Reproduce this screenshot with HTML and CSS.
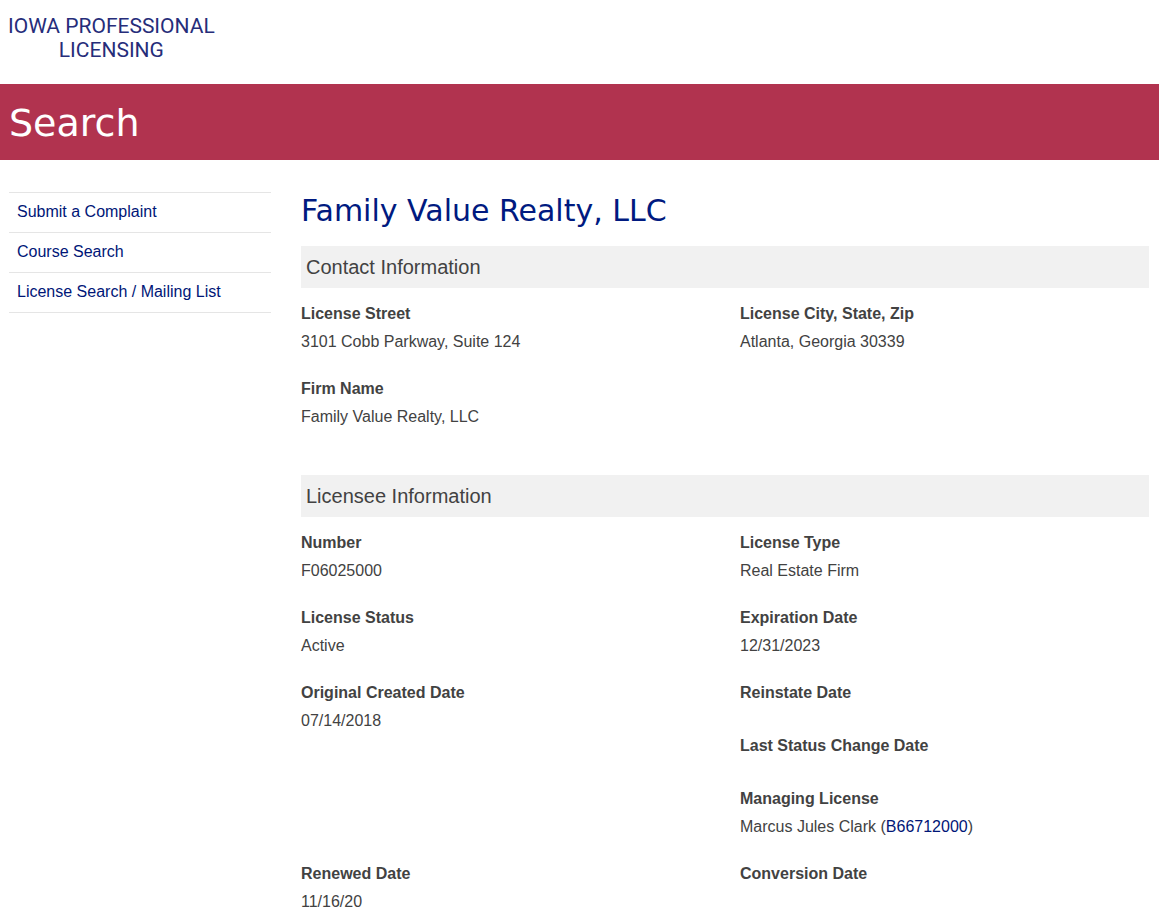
FILE: index.html
```html
<!DOCTYPE html>
<html lang="en">
<head>
<meta charset="utf-8">
<title>Iowa Professional Licensing - Search</title>
<link rel="stylesheet" href="styles.css">
</head>
<body>
<header class="site-header"><div class="logo"><div>IOWA PROFESSIONAL</div><div>LICENSING</div></div></header>
<div class="banner"><h1 class="banner-title">Search</h1></div>
<div class="layout">
  <nav class="sidebar">
    <ul class="menu">
      <li class="menu-item"><a class="link" href="#">Submit a Complaint</a></li>
      <li class="menu-item"><a class="link" href="#">Course Search</a></li>
      <li class="menu-item"><a class="link" href="#">License Search / Mailing List</a></li>
    </ul>
  </nav>
  <main class="content">
    <h2 class="title">Family Value Realty, LLC</h2>
    <section class="section">
      <h3 class="section-title">Contact Information</h3>
      <div class="row">
        <dl class="field"><dt>License Street</dt><dd>3101 Cobb Parkway, Suite 124</dd></dl>
        <dl class="field"><dt>License City, State, Zip</dt><dd>Atlanta, Georgia 30339</dd></dl>
      </div>
      <div class="row">
        <dl class="field"><dt>Firm Name</dt><dd>Family Value Realty, LLC</dd></dl>
      </div>
    </section>
    <section class="section">
      <h3 class="section-title">Licensee Information</h3>
      <div class="row">
        <dl class="field"><dt>Number</dt><dd>F06025000</dd></dl>
        <dl class="field"><dt>License Type</dt><dd>Real Estate Firm</dd></dl>
      </div>
      <div class="row">
        <dl class="field"><dt>License Status</dt><dd>Active</dd></dl>
        <dl class="field"><dt>Expiration Date</dt><dd>12/31/2023</dd></dl>
      </div>
      <div class="row">
        <dl class="field"><dt>Original Created Date</dt><dd>07/14/2018</dd></dl>
        <div class="stack">
          <dl class="field"><dt>Reinstate Date</dt><dd></dd></dl>
          <dl class="field"><dt>Last Status Change Date</dt><dd></dd></dl>
          <dl class="field"><dt>Managing License</dt><dd>Marcus Jules Clark (<a class="link" href="#">B66712000</a>)</dd></dl>
        </div>
      </div>
      <div class="row">
        <dl class="field"><dt>Renewed Date</dt><dd>11/16/20</dd></dl>
        <dl class="field"><dt>Conversion Date</dt><dd></dd></dl>
      </div>
    </section>
  </main>
</div>
</body>
</html>
```
FILE: styles.css
```css
* { box-sizing: border-box; }
body { margin: 0; background: #fff; color: #424242; font: 16px/24px "Liberation Sans", Arial, sans-serif; }
.site-header { display: flex; padding: 14px 8px 22px; }
.logo { color: #262d7a; font: 21px/24px Roboto, sans-serif; text-align: center; }
.banner { background: #b1334f; padding: 13px 9px 11px; }
.banner-title { margin: 0; color: #fff; font: 38px/52px "DejaVu Sans", Verdana, sans-serif; }
.layout { display: grid; grid-template-columns: 262px 1fr; gap: 30px; padding: 32px 10px 0 9px; }
.menu { margin: 0; padding: 0; list-style: none; border-top: 1px solid #e5e5e5; }
.menu-item { padding: 7px 8px 8px; border-bottom: 1px solid #e5e5e5; }
.link { color: #001677; text-decoration: none; }
.title { margin: 0 0 16px; color: #001a80; font: 30px/38px "DejaVu Sans", Verdana, sans-serif; }
.section { margin-bottom: 23px; }
.section:last-child { margin-bottom: 0; }
.section:last-child .row:last-child .field { margin-bottom: 0; }
.section-title { margin: 0 0 14px; padding: 6px 5px; background: #f1f1f1; font-size: 20px; line-height: 30px; font-weight: 400; }
.row { display: grid; grid-template-columns: 1fr 1fr; column-gap: 30px; }
.field { margin: 0 0 23px; }
.field dt { margin-bottom: 4px; font-weight: 700; }
.field dd { margin: 0; }
.field dd:empty { height: 2px; }
.stack { display: flex; flex-direction: column; }
```
